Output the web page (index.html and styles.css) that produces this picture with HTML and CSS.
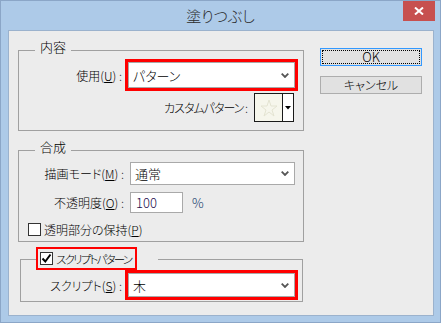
FILE: index.html
```html
<!DOCTYPE html>
<html lang="ja">
<head>
    <meta charset="UTF-8">
    <title>塗りつぶし</title>
    <link rel="stylesheet" href="styles.css">
</head>
<body>
    <div class="window">
        <div class="titlebar">
            <span></span>
            <span class="title">塗りつぶし</span>
            <span class="close">
                <svg width="10" height="8" viewBox="0 0 10 8"><path d="M1 0.5 L9 7.5 M9 0.5 L1 7.5" stroke="#fff" stroke-width="2"/></svg>
            </span>
        </div>
        <div class="client">
            <div class="left">
                <div class="group g1">
                    <div class="legend">内容</div>
                    <div class="row r-use">
                        <label class="lbl">使用(<u>U</u>) :</label>
                        <div class="hl">
                            <div class="select sel-red">
                                <span>パターン</span>
                                <svg class="chev" width="8" height="5" viewBox="0 0 8 5"><path d="M0.7 0.7 L4 4 L7.3 0.7" fill="none" stroke="#555" stroke-width="1.8"/></svg>
                            </div>
                        </div>
                    </div>
                    <div class="row r-custom">
                        <label class="lbl-plain">カスタムパターン :</label>
                        <div class="swatch">
                            <div class="swatch-fill">
                                <svg width="20" height="20" viewBox="0 0 20 20"><path d="M10 2 L12 8 L18 8 L13 12 L15 18 L10 14 L5 18 L7 12 L2 8 L8 8 Z" fill="none" stroke="#e4e4d2" stroke-width="1"/></svg>
                            </div>
                            <div class="swatch-arrow">
                                <svg width="6" height="4" viewBox="0 0 6 4"><path d="M0 0 L6 0 L3 3.5 Z" fill="#000"/></svg>
                            </div>
                        </div>
                    </div>
                </div>

                <div class="group g2">
                    <div class="legend">合成</div>
                    <div class="row r-mode">
                        <label class="lbl">描画モード(<u>M</u>) :</label>
                        <div class="select sel-mode">
                            <span>通常</span>
                            <svg class="chev" width="8" height="5" viewBox="0 0 8 5"><path d="M0.7 0.7 L4 4 L7.3 0.7" fill="none" stroke="#555" stroke-width="1.8"/></svg>
                        </div>
                    </div>
                    <div class="row r-opacity">
                        <label class="lbl">不透明度(<u>O</u>) :</label>
                        <div class="input">100</div>
                        <span class="pct">%</span>
                    </div>
                    <div class="row r-keep">
                        <span class="check"></span>
                        <span class="check-text">透明部分の保持(<u>P</u>)</span>
                    </div>
                </div>

                <div class="group g3">
                    <div class="legend legend-check">
                        <div class="hl-small">
                            <span class="check checked">
                                <svg width="11" height="11" viewBox="0 0 11 11"><path d="M1.5 5.5 L4.3 8.5 L9.5 1.5" fill="none" stroke="#000" stroke-width="2"/></svg>
                            </span>
                            <span class="check-text narrow">スクリプトパターン</span>
                        </div>
                    </div>
                    <div class="row r-script">
                        <label class="lbl">スクリプト(<u>S</u>) :</label>
                        <div class="hl">
                            <div class="select sel-red">
                                <span>木</span>
                                <svg class="chev" width="8" height="5" viewBox="0 0 8 5"><path d="M0.7 0.7 L4 4 L7.3 0.7" fill="none" stroke="#555" stroke-width="1.8"/></svg>
                            </div>
                        </div>
                    </div>
                </div>
            </div>

            <div class="right">
                <div class="btn btn-default"><span class="focus">OK</span></div>
                <div class="btn">キャンセル</div>
            </div>
        </div>
    </div>
</body>
</html>
```

FILE: styles.css
```css
* { box-sizing: border-box; }

body {
    margin: 0;
    font-family: "Noto Sans CJK JP", "Noto Sans", sans-serif;
    font-size: 12px;
    font-weight: 300;
    font-feature-settings: "palt";
    color: #000;
}

.window {
    width: 441px;
    height: 323px;
    border: 1px solid #8ba6c7;
    background: #adcae8;
}

.titlebar {
    height: 29px;
    display: grid;
    grid-template-columns: 1fr auto 1fr;
}
.title {
    align-self: center;
    font-size: 15px;
    line-height: 20px;
    color: #2b2b2b;
    padding-top: 1px;
}
.close {
    justify-self: end;
    width: 32px;
    height: 20px;
    margin-right: 5px;
    background: #c7504f;
    display: flex;
    align-items: center;
    justify-content: center;
}

.client {
    width: 426px;
    height: 286px;
    margin-left: 7px;
    border: 1px solid #9bb2cd;
    background: #ececec;
    display: flex;
}

.left {
    margin-left: 9px;
    padding-top: 19px;
    width: 286px;
}

.group {
    border: 1px solid #a0a0a0;
    width: 286px;
}
.g1 { height: 81px; }
.g2 { height: 92px; margin-top: 19px; }
.g3 { height: 43px; margin-top: 17px; margin-left: 2px; width: 283px; }

.legend {
    margin: -12px 0 0 16px;
    padding: 0 5px;
    width: fit-content;
    height: 16px;
    line-height: 16px;
    font-size: 13px;
    background: #ececec;
}
.legend-check {
    margin: -13px 0 0 15px;
    padding: 0 21px 0 0;
    height: 23px;
}
.hl-small {
    border: 2px solid #ff0000;
    width: 101px;
    height: 23px;
    display: flex;
    align-items: center;
    padding-left: 2px;
    font-size: 12px;
}

.row {
    display: flex;
    align-items: center;
}
.lbl {
    text-align: right;
    white-space: nowrap;
}
.lbl-plain {
    white-space: nowrap;
    letter-spacing: -1px;
}

.r-use { margin-top: 4px; }
.r-use .lbl { width: 106px; padding-right: 3px; }

.hl {
    border: 3px solid #ff0000;
    width: 173px;
    height: 32px;
}

.select {
    border: 1px solid #a9a9a9;
    background: #fff;
    display: flex;
    align-items: center;
    justify-content: space-between;
    padding: 0 5px 0 4px;
    font-size: 13px;
}
.sel-red { height: 26px; }
.sel-mode { width: 165px; height: 23px; }
.chev { flex: none; }

.r-custom {
    margin-top: 2px;
    justify-content: flex-end;
    padding-right: 9px;
}
.swatch {
    margin-left: 7px;
    width: 40px;
    height: 29px;
    border: 1px solid #1a1a1a;
    display: flex;
}
.swatch-fill {
    flex: 1;
    background: #f6f6ec;
    display: flex;
    align-items: center;
    justify-content: center;
}
.swatch-arrow {
    width: 11px;
    border-left: 1px solid #1a1a1a;
    background: #fff;
    display: flex;
    align-items: center;
    justify-content: center;
}

.r-mode { margin-top: 7px; }
.r-mode .lbl { width: 111px; padding-right: 6px; }

.r-opacity { margin-top: 7px; }
.r-opacity .lbl { width: 111px; padding-right: 6px; }
.input {
    width: 53px;
    height: 21px;
    border: 1px solid #a9a9a9;
    background: #fff;
    padding-left: 5px;
    line-height: 19px;
    font-size: 13px;
    color: #1a0a4a;
}
.pct {
    margin-left: 9px;
    font-size: 13px;
    color: #123a6a;
}

.r-keep { margin: 8px 0 0 9px; }
.check {
    width: 13px;
    height: 13px;
    border: 1px solid #333;
    background: #fff;
    flex: none;
}
.check.checked {
    display: flex;
    align-items: center;
    justify-content: center;
}
.check-text {
    margin-left: 3px;
    white-space: nowrap;
}
.check-text.narrow {
    font-size: 11.5px;
    letter-spacing: -1.8px;
}

.r-script .lbl { width: 104px; padding-right: 3px; }
.r-script .hl { height: 30px; }
.r-script .sel-red { height: 24px; }

.right {
    margin-left: 16px;
    padding-top: 17px;
}
.btn {
    width: 102px;
    height: 18px;
    border: 1px solid #adadad;
    background: #e1e1e1;
    display: flex;
    align-items: center;
    justify-content: center;
    font-size: 12px;
    line-height: 14px;
    margin-bottom: 10px;
}
.btn-default {
    border-color: #3399ff;
    padding: 1px;
    font-size: 13px;
}
.focus {
    width: 100%;
    height: 100%;
    border: 1px dotted #000;
    display: flex;
    align-items: center;
    justify-content: center;
}
```
